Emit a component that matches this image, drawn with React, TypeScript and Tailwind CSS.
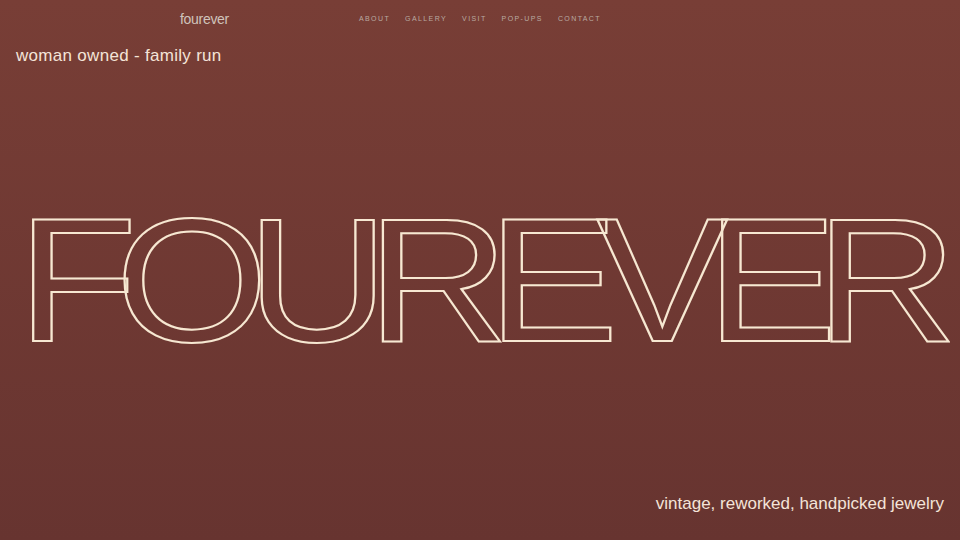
export default function App() {
  return (
    <div className="w-[960px] h-[540px] overflow-hidden flex flex-col bg-gradient-to-b from-[#783e36] to-[#673430] font-['Liberation_Sans',Arial,sans-serif]">
      <header className="grid grid-cols-[1fr_auto_1fr] items-center h-[38px]">
        <div className="pl-[180px] text-[14px] text-[#cfc3bb] tracking-[-0.3px]">fourever</div>
        <nav className="flex gap-[15px] text-[7px] tracking-[0.2em] text-[#b9aaa1] uppercase">
          <span>About</span>
          <span>Gallery</span>
          <span>Visit</span>
          <span>Pop-ups</span>
          <span>Contact</span>
        </nav>
        <div />
      </header>
      <div className="mt-[8px] pl-[16px] text-[17px] leading-[20px] text-[#f4e4d8] tracking-[0.3px]">woman owned - family run</div>
      <div className="mt-[134px] pl-[17px] h-[160px] whitespace-nowrap">
        <div className="inline-block origin-left scale-x-[1.12] text-[176px] leading-[160px] tracking-[-0.112em] text-transparent [-webkit-text-stroke:2px_#f7e8d2]">
          FOUREVER
        </div>
      </div>
      <div className="flex-1" />
      <div className="flex justify-end pr-[16px] pb-[26px] text-[17px] leading-[20px] text-[#f4e4d8] tracking-[0px]">
        vintage, reworked, handpicked jewelry
      </div>
    </div>
  );
}
